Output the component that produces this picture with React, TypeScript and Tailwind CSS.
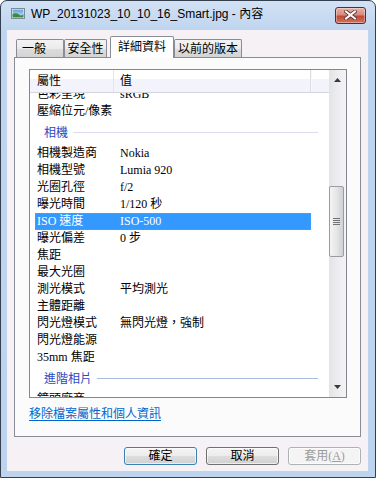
import type { ReactNode } from 'react';

const LIST_FONT = "font-['Liberation_Serif','Noto_Sans_CJK_TC',serif]";

type Row =
  | { kind: 'row'; k: string; v?: string; selected?: boolean }
  | { kind: 'group'; k: string; line: string };

const ROWS: Row[] = [
  { kind: 'row', k: '色彩呈現', v: 'sRGB' },
  { kind: 'row', k: '壓縮位元/像素' },
  { kind: 'group', k: '相機', line: 'bg-[#dedbf0]' },
  { kind: 'row', k: '相機製造商', v: 'Nokia' },
  { kind: 'row', k: '相機型號', v: 'Lumia 920' },
  { kind: 'row', k: '光圈孔徑', v: 'f/2' },
  { kind: 'row', k: '曝光時間', v: '1/120 秒' },
  { kind: 'row', k: 'ISO 速度', v: 'ISO-500', selected: true },
  { kind: 'row', k: '曝光偏差', v: '0 步' },
  { kind: 'row', k: '焦距' },
  { kind: 'row', k: '最大光圈' },
  { kind: 'row', k: '測光模式', v: '平均測光' },
  { kind: 'row', k: '主體距離' },
  { kind: 'row', k: '閃光燈模式', v: '無閃光燈，強制' },
  { kind: 'row', k: '閃光燈能源' },
  { kind: 'row', k: '35mm 焦距' },
  { kind: 'group', k: '進階相片', line: 'bg-[#a9bde0]' },
  { kind: 'row', k: '鏡頭廠商' },
];

// Small picture icon in the title bar
function PictureIcon() {
  return (
    <svg width="14" height="11" viewBox="0 0 14 11">
      <defs>
        <linearGradient id="sky" x1="0" y1="0" x2="0" y2="1">
          <stop offset="0" stopColor="#5fa3d8" />
          <stop offset="1" stopColor="#cfe6f5" />
        </linearGradient>
      </defs>
      <rect x="0.5" y="0.5" width="13" height="10" fill="#fff" stroke="#7d8a99" />
      <rect x="1.5" y="1.5" width="11" height="8" fill="url(#sky)" />
      <path d="M1.5 9.5 L1.5 6 Q5 4.5 8 6.5 T12.5 6 L12.5 9.5 Z" fill="#3f8a3c" />
    </svg>
  );
}

function CloseButton() {
  return (
    <div className="flex h-[17px] w-[31px] items-center justify-center rounded-[3px] border border-[#5b2a2a] bg-[linear-gradient(#e8b0a6_0%,#d98a7c_45%,#c24a35_55%,#d2735f_100%)] shadow-[inset_0_0_0_1px_rgba(255,255,255,0.35)]">
      <svg width="13" height="10" viewBox="0 0 13 10">
        <path
          d="M2 1.5 L11 8.5 M11 1.5 L2 8.5"
          stroke="#5a3030"
          strokeWidth="3.6"
          strokeLinecap="square"
        />
        <path
          d="M2 1.5 L11 8.5 M11 1.5 L2 8.5"
          stroke="#ffffff"
          strokeWidth="2"
          strokeLinecap="square"
        />
      </svg>
    </div>
  );
}

function Tab({
  children,
  width,
  selected,
  className = '',
}: {
  children: ReactNode;
  width: string;
  selected?: boolean;
  className?: string;
}) {
  if (selected) {
    return (
      <div
        className={`relative z-10 -mb-px flex h-[22px] ${width} items-center justify-center rounded-t-[2px] border border-b-0 border-[#898c95] bg-white pb-[2px] ${className}`}
      >
        {children}
      </div>
    );
  }
  return (
    <div
      className={`flex h-[18px] ${width} items-center justify-center rounded-t-[2px] border border-b-0 border-[#898c95] bg-[linear-gradient(#f3f3f3_0%,#ebebeb_50%,#dedede_50%,#d3d3d3_100%)] ${className}`}
    >
      {children}
    </div>
  );
}

function Button({
  children,
  variant = 'normal',
}: {
  children: ReactNode;
  variant?: 'default' | 'normal' | 'disabled';
}) {
  const styles = {
    default:
      'border-[#3c7fb1] bg-[linear-gradient(#f4f4f4_0%,#ececec_50%,#dedede_50%,#d0d0d0_100%)] text-black',
    normal:
      'border-[#707070] bg-[linear-gradient(#f4f4f4_0%,#ececec_50%,#dedede_50%,#d0d0d0_100%)] text-black',
    disabled: 'border-[#adb2b5] bg-[#f4f4f4] text-[#9c9c9c]',
  }[variant];
  return (
    <div
      className={`flex h-[18px] w-[73px] items-center justify-center rounded-[3px] border text-[12px] leading-none shadow-[inset_0_0_0_1px_rgba(255,255,255,0.6)] ${styles}`}
    >
      {children}
    </div>
  );
}

function ScrollBar() {
  return (
    <div className="relative flex w-[17px] flex-col bg-[linear-gradient(to_right,#e3e3e6,#ececef_45%,#f6f3f6)]">
      {/* up arrow */}
      <div className="flex h-[17px] items-center justify-center pt-[3px]">
        <svg width="7" height="4" viewBox="0 0 7 4">
          <path d="M3.5 0 L7 4 L0 4 Z" fill="#3a3a3a" />
        </svg>
      </div>
      {/* thumb */}
      <div className="mt-[99px] flex h-[71px] w-[15px] items-center justify-center rounded-[2px] border border-[#9a9ca1] bg-[linear-gradient(to_right,#f4f4f4,#e6e6e8_50%,#cfd0d4)]">
        <div className="flex w-[7px] flex-col gap-[1px]">
          <div className="h-px bg-[#6f7279]" />
          <div className="h-px bg-[#6f7279]" />
          <div className="h-px bg-[#6f7279]" />
          <div className="h-px bg-[#6f7279]" />
        </div>
      </div>
      <div className="flex-1" />
      {/* down arrow */}
      <div className="flex h-[17px] items-center justify-center pb-[3px]">
        <svg width="7" height="4" viewBox="0 0 7 4">
          <path d="M0 0 L7 0 L3.5 4 Z" fill="#3a3a3a" />
        </svg>
      </div>
    </div>
  );
}

function PropertyList() {
  return (
    <div className="ml-[14px] mt-[11px] flex h-[329px] w-[318px] border border-[#828790] bg-white">
      <div className="flex w-[299px] flex-col">
        {/* column header */}
        <div className="flex h-[23px] shrink-0 border-b border-[#d5d5e1] bg-[linear-gradient(#ffffff_0%,#ffffff_42%,#f3f4fb_42%,#f3f4fb_100%)] text-[12px] leading-[23px]">
          <div className="w-[83px] pl-[7px]">屬性</div>
          <div className="w-px bg-[#e3e4ec]" />
          <div className="w-[196px] pl-[6px]">值</div>
          <div className="w-px bg-[#dcdde5]" />
          <div className="w-px bg-[#f8f8fb]" />
        </div>
        {/* rows */}
        <div className="flex-1 overflow-hidden">
          <div className="-mt-[7px] flex flex-col">
            {ROWS.map((r, i) =>
              r.kind === 'group' ? (
                <div key={i} className="ml-[5px] flex h-[25px] w-[283px] items-center pl-[9px]">
                  <span className="text-[#2b48bf]">{r.k}</span>
                  <div className={`ml-[5px] h-px flex-1 ${r.line}`} />
                </div>
              ) : (
                <div
                  key={i}
                  className={`ml-[5px] flex h-[17px] w-[276px] items-center leading-[17px] ${
                    r.selected
                      ? 'bg-[#3399ff] text-white outline-1 -outline-offset-1 outline-dotted outline-[#d9822b]'
                      : ''
                  }`}
                >
                  <div className="w-[85px] whitespace-nowrap pl-[2px]">{r.k}</div>
                  <div className="whitespace-nowrap">{r.v}</div>
                </div>
              )
            )}
          </div>
        </div>
      </div>
      <ScrollBar />
    </div>
  );
}

export default function App() {
  return (
    <div className="h-[480px] w-[377px] bg-white">
      <div className="flex h-[478px] w-[376px] flex-col rounded-t-[7px] border border-[#34404f] bg-[linear-gradient(#d2e2f5_0px,#bfd4ef_30px,#bed3ee_100%)]">
        {/* title bar */}
        <div className="flex h-[29px] shrink-0 items-center pb-[4px] pl-[10px] pr-[9px]">
          <PictureIcon />
          <span className="ml-[6px] whitespace-nowrap font-['Liberation_Sans','Noto_Sans_CJK_TC',sans-serif] text-[12px] text-black">
            WP_20131023_10_10_16_Smart.jpg - 內容
          </span>
          <div className="flex-1" />
          <div className="mt-[3px]">
            <CloseButton />
          </div>
        </div>

        {/* client area */}
        <div
          className={`ml-[6px] flex h-[441px] w-[361px] flex-col bg-[#f5f1f5] text-[12px] text-black ${LIST_FONT}`}
        >
          {/* tabs */}
          <div className="mt-[6px] flex h-[21px] shrink-0 items-end pl-[9px]">
            <Tab width="w-[48px]" className="!justify-start pl-[5px]">一般</Tab>
            <Tab width="w-[43px]">安全性</Tab>
            <Tab width="w-[64px]" selected className="ml-[3px]">詳細資料</Tab>
            <Tab width="w-[68px]">以前的版本</Tab>
          </div>

          {/* tab panel */}
          <div className="mx-[7px] flex h-[380px] flex-col border border-[#898c95] bg-[#fcfbfc]">
            <PropertyList />
            <div className="ml-[14px] mt-[8px] leading-[17px]">
              <span className="cursor-pointer text-[#0066cc] underline underline-offset-2">
                移除檔案屬性和個人資訊
              </span>
            </div>
          </div>

          {/* buttons */}
          <div className="mt-[10px] flex justify-end gap-[9px] pr-[7px]">
            <Button variant="default">確定</Button>
            <Button>取消</Button>
            <Button variant="disabled">
              套用(<span className="underline">A</span>)
            </Button>
          </div>
        </div>
      </div>
    </div>
  );
}
